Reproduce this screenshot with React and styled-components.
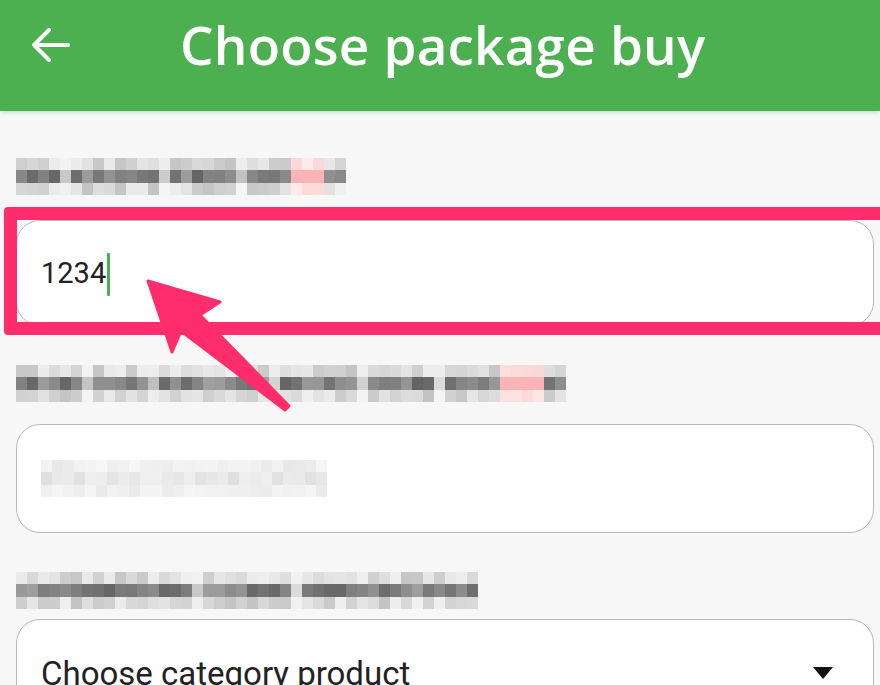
import React from 'react';
import styled, { createGlobalStyle } from 'styled-components';

const GlobalStyle = createGlobalStyle`
  html, body {
    margin: 0;
    padding: 0;
    background: #f7f7f7;
    overflow: hidden;
  }
  body {
    font-family: Roboto, "Noto Sans", sans-serif;
  }
`;

const Page = styled.div`
  position: relative;
  width: 880px;
  height: 685px;
  overflow: hidden;
  background: #f7f7f7;
`;

const Header = styled.header`
  height: 111px;
  background: #4caf50;
  display: flex;
  align-items: center;
  padding: 0 0 22px 32px;
  box-sizing: border-box;
  box-shadow: 0 2px 3px rgba(76, 175, 80, 0.25);
`;

const BackButton = styled.button`
  border: 0;
  background: none;
  padding: 0;
  display: flex;
  cursor: pointer;
`;

const Title = styled.h1`
  margin: 0 0 0 110px;
  font-family: "Open Sans", "Noto Sans", sans-serif;
  font-weight: 600;
  font-size: 53px;
  line-height: 1;
  letter-spacing: 0.2px;
  color: #fff;
`;

const Content = styled.main`
  display: flex;
  flex-direction: column;
  padding: 47px 6px 0 16px;
`;

const Field = styled.section`
  display: flex;
  flex-direction: column;
  gap: ${(p) => p.$gap}px;
  margin-bottom: 39px;
`;

const Mosaic = styled.div`
  display: grid;
  grid-template-columns: repeat(${(p) => p.$cols}, 11px);
  grid-template-rows: 12px 13px 12px;
  align-self: ${(p) => (p.$light ? 'center' : 'flex-start')};
`;

const InputWrap = styled.div`
  position: relative;
`;

const Highlight = styled.div`
  position: absolute;
  top: -13px;
  left: -12px;
  right: -30px;
  bottom: -9px;
  border: 13px solid #ff2d6b;
  border-radius: 4px;
  pointer-events: none;
`;

const InputBox = styled.div`
  height: ${(p) => p.$height}px;
  box-sizing: border-box;
  background: #fff;
  border: 1.5px solid #b8b8b8;
  border-radius: 24px;
  display: flex;
  align-items: center;
  padding: 0 40px 0 24px;
`;

const Value = styled.span`
  font-family: Roboto, "Noto Sans", sans-serif;
  font-size: 29px;
  color: #222;
`;

const Caret = styled.span`
  display: inline-block;
  width: 3px;
  height: 43px;
  margin: 2px 0 0 1px;
  border-radius: 1px;
  background: #4caf50;
`;

const SelectText = styled.span`
  flex: 1;
  font-family: Roboto, "Noto Sans", sans-serif;
  font-size: 33px;
  color: #222;
`;

const Pointer = styled.svg`
  position: absolute;
  left: 140px;
  top: 270px;
  pointer-events: none;
`;

const rnd = (i, seed) => {
  const x = Math.sin(i * 12.9898 + seed * 78.233) * 43758.5453;
  return x - Math.floor(x);
};

const gray = (v) => `rgb(${v},${v},${v})`;

function Blurred({ cols, seed, pink = [], gaps = [], light }) {
  const cells = [];
  for (let r = 0; r < 3; r++) {
    for (let c = 0; c < cols; c++) {
      const n = rnd(r * 97 + c, seed);
      let color;
      if (pink.includes(c)) {
        color = r === 1 ? 'rgb(250,180,182)' : `rgb(253,${215 + Math.round(n * 20)},${215 + Math.round(n * 20)})`;
      } else if (light) {
        color = gray(r === 1 ? 222 + Math.round(n * 18) : 232 + Math.round(n * 14));
      } else if (gaps.includes(c)) {
        color = gray(r === 1 ? 190 + Math.round(n * 30) : 236 + Math.round(n * 10));
      } else if (r === 1) {
        color = gray(100 + Math.round(n * 60));
      } else {
        color = gray(195 + Math.round(n * 45));
      }
      cells.push(<span key={`${r}-${c}`} style={{ background: color }} />);
    }
  }
  return <Mosaic $cols={cols} $light={light}>{cells}</Mosaic>;
}

const BackArrow = () => (
  <svg width="38" height="34" viewBox="0 0 38 34" fill="none" stroke="#fff" strokeWidth="4" strokeLinecap="round" strokeLinejoin="round">
    <path d="M36 17H3" />
    <path d="M17 2L2 17l15 15" />
  </svg>
);

export default function App() {
  return (
    <Page>
      <GlobalStyle />
      <Header>
        <BackButton aria-label="Back">
          <BackArrow />
        </BackButton>
        <Title>Choose package buy</Title>
      </Header>
      <Content>
        <Field $gap={25}>
          <Blurred cols={30} seed={3} pink={[25, 26, 27]} gaps={[4, 13, 20]} />
          <InputWrap>
            <InputBox $height={106}>
              <Value>1234</Value>
              <Caret />
            </InputBox>
            <Highlight />
          </InputWrap>
        </Field>
        <Field $gap={22}>
          <Blurred cols={50} seed={7} pink={[44, 45, 46, 47]} gaps={[6, 12, 23, 31, 38]} />
          <InputBox $height={109}>
            <Blurred cols={26} seed={11} light />
          </InputBox>
        </Field>
        <Field $gap={10}>
          <Blurred cols={42} seed={19} gaps={[16, 25]} />
          <InputBox $height={108}>
            <SelectText>Choose category product</SelectText>
            <svg width="20" height="12" viewBox="0 0 20 12">
              <path d="M0 0h20L10 12z" fill="#111" />
            </svg>
          </InputBox>
        </Field>
      </Content>
      <Pointer width="160" height="150" viewBox="140 270 160 150">
        <path
          d="M148 281L220 302L200 315L289 406L285 410L181 331L172 352Z"
          fill="#ff2d6b"
          stroke="#ff2d6b"
          strokeWidth="3"
          strokeLinejoin="round"
        />
      </Pointer>
    </Page>
  );
}
